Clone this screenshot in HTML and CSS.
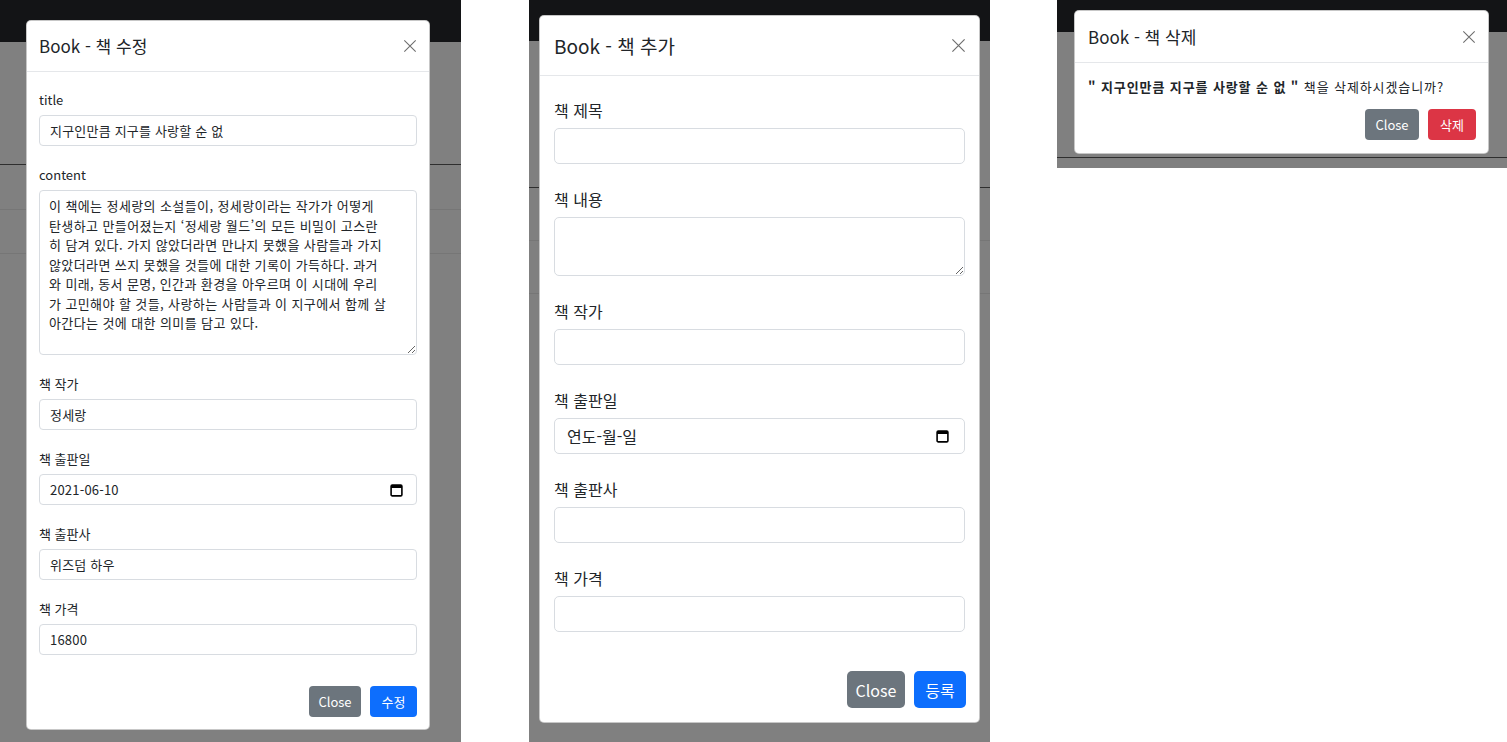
FILE: index.html
```html
<!DOCTYPE html>
<html lang="ko">
<head>
<meta charset="utf-8">
<title>Book modals</title>
<link rel="stylesheet" href="styles.css">
</head>
<body>
<div class="stage">

  <section class="panel panel-edit">
    <div class="topbar"></div>
    <div class="backdrop">
      <div class="row row-head"></div>
      <div class="row row-a"></div>
      <div class="row row-b"></div>
    </div>
    <div class="modal m-edit">
      <div class="m-head">
        <h5 class="m-title">Book - 책 수정</h5>
        <span class="x-btn"><svg viewBox="0 0 16 16"><path d="M1.5 1.5L14.5 14.5M14.5 1.5L1.5 14.5"/></svg></span>
      </div>
      <div class="m-body">
        <div class="group">
          <label class="lbl">title</label>
          <div class="field"><span>지구인만큼 지구를 사랑할 순 없</span></div>
        </div>
        <div class="group">
          <label class="lbl">content</label>
          <textarea class="area area-edit" spellcheck="false">이 책에는 정세랑의 소설들이, 정세랑이라는 작가가 어떻게
탄생하고 만들어졌는지 ‘정세랑 월드’의 모든 비밀이 고스란
히 담겨 있다. 가지 않았더라면 만나지 못했을 사람들과 가지
않았더라면 쓰지 못했을 것들에 대한 기록이 가득하다. 과거
와 미래, 동서 문명, 인간과 환경을 아우르며 이 시대에 우리
가 고민해야 할 것들, 사랑하는 사람들과 이 지구에서 함께 살
아간다는 것에 대한 의미를 담고 있다.</textarea>
        </div>
        <div class="group">
          <label class="lbl">책 작가</label>
          <div class="field"><span>정세랑</span></div>
        </div>
        <div class="group">
          <label class="lbl">책 출판일</label>
          <div class="field field-date"><span>2021-06-10</span>
            <svg class="cal" viewBox="0 0 13 14"><rect x="1.1" y="2.1" width="10.8" height="10.8" rx="1.2" fill="none" stroke="#000" stroke-width="1.6"/><rect x="1" y="2" width="11" height="3" fill="#000"/></svg>
          </div>
        </div>
        <div class="group">
          <label class="lbl">책 출판사</label>
          <div class="field"><span>위즈덤 하우</span></div>
        </div>
        <div class="group">
          <label class="lbl">책 가격</label>
          <div class="field"><span>16800</span></div>
        </div>
      </div>
      <div class="m-foot">
        <span class="btn btn-gray">Close</span>
        <span class="btn btn-blue">수정</span>
      </div>
    </div>
  </section>

  <section class="panel panel-add">
    <div class="topbar"></div>
    <div class="backdrop">
      <div class="row row-head"></div>
      <div class="row row-a"></div>
      <div class="row row-b"></div>
    </div>
    <div class="modal m-add">
      <div class="m-head">
        <h5 class="m-title">Book - 책 추가</h5>
        <span class="x-btn"><svg viewBox="0 0 16 16"><path d="M1.5 1.5L14.5 14.5M14.5 1.5L1.5 14.5"/></svg></span>
      </div>
      <div class="m-body">
        <div class="group">
          <label class="lbl">책 제목</label>
          <div class="field"></div>
        </div>
        <div class="group">
          <label class="lbl">책 내용</label>
          <textarea class="area area-add" spellcheck="false"></textarea>
        </div>
        <div class="group">
          <label class="lbl">책 작가</label>
          <div class="field"></div>
        </div>
        <div class="group">
          <label class="lbl">책 출판일</label>
          <div class="field field-date"><span>연도-월-일</span>
            <svg class="cal" viewBox="0 0 13 14"><rect x="1.1" y="2.1" width="10.8" height="10.8" rx="1.2" fill="none" stroke="#000" stroke-width="1.6"/><rect x="1" y="2" width="11" height="3" fill="#000"/></svg>
          </div>
        </div>
        <div class="group">
          <label class="lbl">책 출판사</label>
          <div class="field"></div>
        </div>
        <div class="group">
          <label class="lbl">책 가격</label>
          <div class="field"></div>
        </div>
      </div>
      <div class="m-foot">
        <span class="btn btn-gray">Close</span>
        <span class="btn btn-blue">등록</span>
      </div>
    </div>
  </section>

  <section class="panel panel-del">
    <div class="topbar"></div>
    <div class="backdrop">
      <div class="row row-head"></div>
    </div>
    <div class="modal m-del">
      <div class="m-head">
        <h5 class="m-title">Book - 책 삭제</h5>
        <span class="x-btn"><svg viewBox="0 0 16 16"><path d="M1.5 1.5L14.5 14.5M14.5 1.5L1.5 14.5"/></svg></span>
      </div>
      <div class="m-body">
        <p class="confirm"><b>" 지구인만큼 지구를 사랑할 순 없 "</b> 책을 삭제하시겠습니까?</p>
      </div>
      <div class="m-foot">
        <span class="btn btn-gray">Close</span>
        <span class="btn btn-red">삭제</span>
      </div>
    </div>
  </section>

</div>
</body>
</html>
```

FILE: styles.css
```css
* { box-sizing: border-box; }

html, body {
  margin: 0;
  padding: 0;
  background: #ffffff;
}

body {
  font-family: "Noto Sans CJK KR", "Noto Sans", sans-serif;
  color: #212529;
}

.stage {
  display: flex;
  align-items: flex-start;
  width: 1507px;
  height: 742px;
  overflow: hidden;
}

/* ---------- panels (page under the backdrop) ---------- */
.panel {
  position: relative;
  display: flex;
  flex-direction: column;
  overflow: hidden;
  flex: none;
}

.panel-edit { width: 461px; height: 742px; margin-right: 68px; }
.panel-add  { width: 461px; height: 742px; margin-right: 67px; }
.panel-del  { width: 450px; height: 168px; }

.topbar { background: #131416; flex: none; }
.panel-edit .topbar { height: 42px; }
.panel-add .topbar { height: 41px; }
.panel-del .topbar { height: 32px; }

.backdrop {
  flex: 1;
  background: #808080;
  display: flex;
  flex-direction: column;
}

.row { flex: none; border-bottom: 1px solid #767676; }
.row-head { border-bottom-color: #2e2e2e; }

.panel-edit .row-head { height: 123px; }
.panel-edit .row-a { height: 45px; }
.panel-edit .row-b { height: 44px; }

.panel-add .row-head { height: 147px; }
.panel-add .row-a { height: 53px; }
.panel-add .row-b { height: 53px; }

.panel-del .row-head { height: 126px; }

/* ---------- modal ---------- */
.modal {
  position: absolute;
  background: #fff;
  border: 1px solid rgba(0, 0, 0, 0.22);
  border-radius: 5px;
  display: flex;
  flex-direction: column;
}

.m-edit { left: 26px; top: 20px; width: 404px; height: 710px; }
.m-add  { left: 10px; top: 15px; width: 441px; height: 708px; }
.m-del  { left: 17px; top: 10px; width: 415px; height: 144px; }

.m-head {
  display: flex;
  align-items: center;
  justify-content: space-between;
  border-bottom: 1px solid #e5e7ea;
  flex: none;
}

.m-title {
  margin: 0;
  font-weight: 400;
  color: #212529;
  white-space: nowrap;
}

.x-btn { display: flex; }
.x-btn svg { fill: none; stroke: #6e6e6e; stroke-width: 1.25; }

.m-edit .m-head { height: 51px; padding: 0 12px; }
.m-edit .m-title { font-size: 17px; line-height: 22px; }
.m-edit .x-btn svg { width: 14px; height: 14px; }

.m-add .m-head { height: 60px; padding: 0 13px 0 14px; }
.m-add .m-title { font-size: 19px; line-height: 28px; }
.m-add .x-btn svg { width: 15px; height: 15px; }

.m-del .m-head { height: 52px; padding: 0 12px 0 13px; }
.m-del .m-title { font-size: 17px; line-height: 22px; }
.m-del .x-btn svg { width: 14px; height: 14px; }

/* ---------- body / forms ---------- */
.m-body { flex: none; }

.m-edit .m-body { padding: 18px 12px 0; }
.m-add .m-body { padding: 22px 14px 0; }
.m-del .m-body { padding: 14px 13px 0; }

.group { display: flex; flex-direction: column; }

.lbl { display: block; color: #212529; }

.field {
  display: flex;
  align-items: center;
  justify-content: space-between;
  background: #fff;
  border: 1px solid #d8dce1;
  color: #212529;
  white-space: nowrap;
}

.area {
  display: block;
  width: 100%;
  border: 1px solid #d8dce1;
  color: #212529;
  font-family: inherit;
  background: #fff;
  overflow: hidden;
  margin: 0;
}

.cal { width: 13px; height: 14px; flex: none; }

/* edit sizes */
.m-edit .group { margin-bottom: 19px; }
.m-edit .lbl { font-size: 13px; line-height: 20px; margin-bottom: 5px; }
.m-edit .field {
  height: 31px;
  border-radius: 4px;
  padding: 0 13px 0 10px;
  font-size: 13px;
  letter-spacing: 0.2px;
}
.m-edit .area {
  height: 165px;
  border-radius: 4px;
  padding: 5px 9px;
  font-size: 13px;
  line-height: 19.5px;
  letter-spacing: 0.4px;
  resize: vertical;
}

/* add sizes */
.m-add .group { margin-bottom: 23px; }
.m-add .lbl { font-size: 16px; line-height: 24px; margin-bottom: 6px; }
.m-add .field {
  height: 36px;
  border-radius: 5px;
  padding: 0 15px 0 12px;
  font-size: 16px;
}
.m-add .area {
  height: 59px;
  border-radius: 5px;
  padding: 6px 12px;
  font-size: 16px;
  resize: vertical;
}

/* delete body */
.confirm {
  margin: 0;
  font-size: 13px;
  line-height: 20px;
  letter-spacing: 0.9px;
  color: #212529;
  white-space: nowrap;
}
.confirm b { font-weight: 700; }

/* ---------- footer / buttons ---------- */
.m-foot {
  display: flex;
  justify-content: flex-end;
  align-items: flex-end;
  gap: 9px;
  margin-top: auto;
  flex: none;
}

.m-edit .m-foot { padding: 0 12px 12px; }
.m-add .m-foot { padding: 0 13px 14px; }
.m-del .m-foot { padding: 0 12px 13px; }

.btn {
  display: inline-flex;
  align-items: center;
  justify-content: center;
  color: #fff;
  border-radius: 4px;
  white-space: nowrap;
}

.btn-gray { background: #6c757d; }
.btn-blue { background: #0d6efd; }
.btn-red  { background: #dc3545; }

.m-edit .btn { height: 31px; font-size: 13px; padding: 0 10px; }
.m-edit .btn-gray { width: 52px; }
.m-edit .btn-blue { width: 47px; }

.m-add .btn { height: 37px; font-size: 16px; padding: 0 10px; border-radius: 5px; }
.m-add .btn-gray { width: 58px; }
.m-add .btn-blue { width: 52px; }

.m-del .btn { height: 31px; font-size: 13px; padding: 0 10px; }
.m-del .btn-gray { width: 54px; }
.m-del .btn-red { width: 48px; }
```
